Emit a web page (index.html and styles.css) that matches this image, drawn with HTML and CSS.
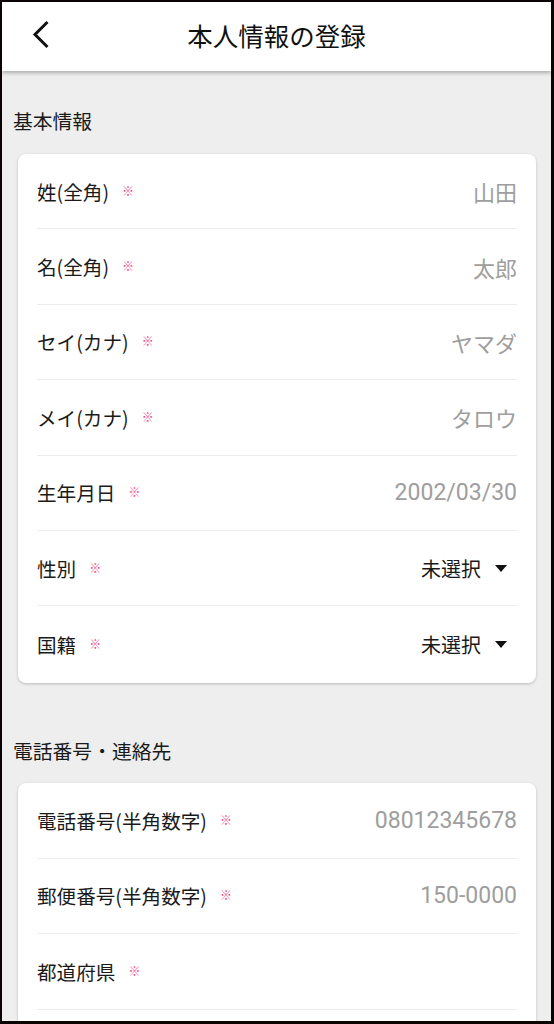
FILE: index.html
```html
<!DOCTYPE html>
<html lang="ja">
<head>
<meta charset="utf-8">
<link rel="stylesheet" href="styles.css">
</head>
<body>
<div class="app">
  <header class="topbar">
    <svg class="back" width="20" height="32" viewBox="0 0 20 32"><path d="M15.5 3 L3 15.5 L15.5 28" fill="none" stroke="#111" stroke-width="3"/></svg>
    <h1 class="title">本人情報の登録</h1>
  </header>
  <main class="content">
    <h2 class="sec-title">基本情報</h2>
    <section class="card">
      <div class="row"><span class="label">姓(全角)</span><span class="req">※</span><span class="value">山田</span></div>
      <div class="row"><span class="label">名(全角)</span><span class="req">※</span><span class="value">太郎</span></div>
      <div class="row"><span class="label">セイ(カナ)</span><span class="req">※</span><span class="value">ヤマダ</span></div>
      <div class="row"><span class="label">メイ(カナ)</span><span class="req">※</span><span class="value">タロウ</span></div>
      <div class="row"><span class="label">生年月日</span><span class="req">※</span><span class="value num">2002/03/30</span></div>
      <div class="row"><span class="label">性別</span><span class="req">※</span><span class="select">未選択<i class="caret"></i></span></div>
      <div class="row last"><span class="label">国籍</span><span class="req">※</span><span class="select">未選択<i class="caret"></i></span></div>
    </section>
    <h2 class="sec-title sec2">電話番号・連絡先</h2>
    <section class="card card-open">
      <div class="row"><span class="label">電話番号(半角数字)</span><span class="req">※</span><span class="value num">08012345678</span></div>
      <div class="row"><span class="label">郵便番号(半角数字)</span><span class="req">※</span><span class="value num">150-0000</span></div>
      <div class="row"><span class="label">都道府県</span><span class="req">※</span><span class="value"></span></div>
    </section>
  </main>
</div>
</body>
</html>
```
FILE: styles.css
```css
html, body {
  margin: 0;
  padding: 0;
  background: #0a0303;
}
body {
  font-family: "Noto Sans CJK JP", sans-serif;
  color: #222;
}
.app {
  margin: 2px 3px 3px 2px;
  height: 1019px;
  overflow: hidden;
  background: #eeeeee;
  position: relative;
}
.topbar {
  height: 69px;
  background: #fff;
  box-shadow: 0 2px 4px rgba(0,0,0,0.28);
  display: flex;
  align-items: center;
  justify-content: center;
  position: relative;
  z-index: 1;
}
.back {
  position: absolute;
  left: 30px;
  top: 17px;
}
.title {
  margin: -3px 0 0 0;
  font-size: 25.5px;
  font-weight: 400;
  color: #111;
  line-height: 1;
}
.content {
  padding: 38px 15px 0 16px;
}
.sec-title {
  margin: 0 0 21px -5px;
  font-size: 19.8px;
  font-weight: 400;
  line-height: 24px;
  color: #1a1a1a;
}
.sec2 {
  margin-top: 56px;
  margin-bottom: 20px;
}
.card {
  background: #fff;
  border-radius: 8px;
  box-shadow: 0 1px 3px rgba(0,0,0,0.22);
  padding: 0 19px;
}
.card-open {
  padding-bottom: 60px;
}
.row {
  height: 75.4px;
  box-sizing: border-box;
  border-bottom: 1px solid #ececec;
  display: flex;
  align-items: center;
}
.row.last {
  border-bottom: none;
  height: 77px;
}
.label {
  font-size: 19.6px;
  color: #1a1a1a;
}
.req {
  color: #f0468a;
  font-size: 12px;
  margin-left: 13px;
  margin-top: -2px;
}
.value {
  margin-left: auto;
  font-size: 22px;
  color: #9e9e9e;
}
.value.num {
  font-family: Roboto, "Noto Sans CJK JP", sans-serif;
  font-size: 23px;
}
.select {
  margin-left: auto;
  font-size: 20px;
  color: #1a1a1a;
  display: flex;
  align-items: center;
}
.caret {
  display: inline-block;
  width: 0;
  height: 0;
  border-left: 6.5px solid transparent;
  border-right: 6.5px solid transparent;
  border-top: 7px solid #111;
  margin-left: 14px;
  margin-right: 10px;
}
```
